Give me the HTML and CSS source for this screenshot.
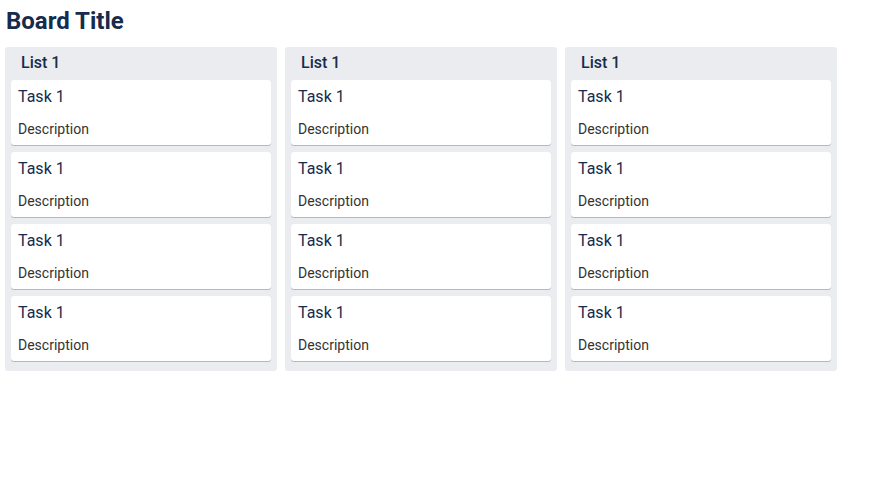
FILE: index.html
```html
<!DOCTYPE html>
<html>
<head>
<meta charset="utf-8">
<link rel="stylesheet" href="styles.css">
</head>
<body>
<h1 class="board-title">Board Title</h1>
<div class="board">
  <div class="list">
    <div class="list-header">List 1</div>
    <div class="card"><div class="card-title">Task 1</div><div class="card-desc">Description</div></div>
    <div class="card"><div class="card-title">Task 1</div><div class="card-desc">Description</div></div>
    <div class="card"><div class="card-title">Task 1</div><div class="card-desc">Description</div></div>
    <div class="card"><div class="card-title">Task 1</div><div class="card-desc">Description</div></div>
  </div>
  <div class="list">
    <div class="list-header">List 1</div>
    <div class="card"><div class="card-title">Task 1</div><div class="card-desc">Description</div></div>
    <div class="card"><div class="card-title">Task 1</div><div class="card-desc">Description</div></div>
    <div class="card"><div class="card-title">Task 1</div><div class="card-desc">Description</div></div>
    <div class="card"><div class="card-title">Task 1</div><div class="card-desc">Description</div></div>
  </div>
  <div class="list">
    <div class="list-header">List 1</div>
    <div class="card"><div class="card-title">Task 1</div><div class="card-desc">Description</div></div>
    <div class="card"><div class="card-title">Task 1</div><div class="card-desc">Description</div></div>
    <div class="card"><div class="card-title">Task 1</div><div class="card-desc">Description</div></div>
    <div class="card"><div class="card-title">Task 1</div><div class="card-desc">Description</div></div>
  </div>
</div>
</body>
</html>
```
FILE: styles.css
```css
body {
  margin: 0;
  background: #fff;
  font-family: Roboto, "Noto Sans", sans-serif;
  color: #172b4d;
}
.board-title {
  margin: 0;
  padding: 7px 6px 0 6px;
  font-size: 24px;
  line-height: 28px;
  font-weight: 700;
  color: #172b4d;
}
.board {
  display: flex;
  gap: 8px;
  padding: 12px 5px 0 5px;
  align-items: flex-start;
}
.list {
  width: 272px;
  background: #ebecf0;
  border-radius: 3px;
  padding: 0 6px 3px 6px;
  box-sizing: border-box;
  display: flex;
  flex-direction: column;
}
.list-header {
  padding: 6px 10px 7px 10px;
  font-size: 16px;
  line-height: 20px;
  font-weight: 500;
  color: #172b4d;
}
.card {
  background: #fff;
  border-radius: 3px;
  box-shadow: 0 1px 0 rgba(9, 30, 66, 0.25);
  padding: 7px 7px 6px 7px;
  margin-bottom: 7px;
}
.card-title {
  font-size: 16px;
  line-height: 20px;
  color: #172b4d;
  margin-bottom: 12px;
}
.card-desc {
  font-size: 14px;
  line-height: 20px;
  color: #333;
}
```
